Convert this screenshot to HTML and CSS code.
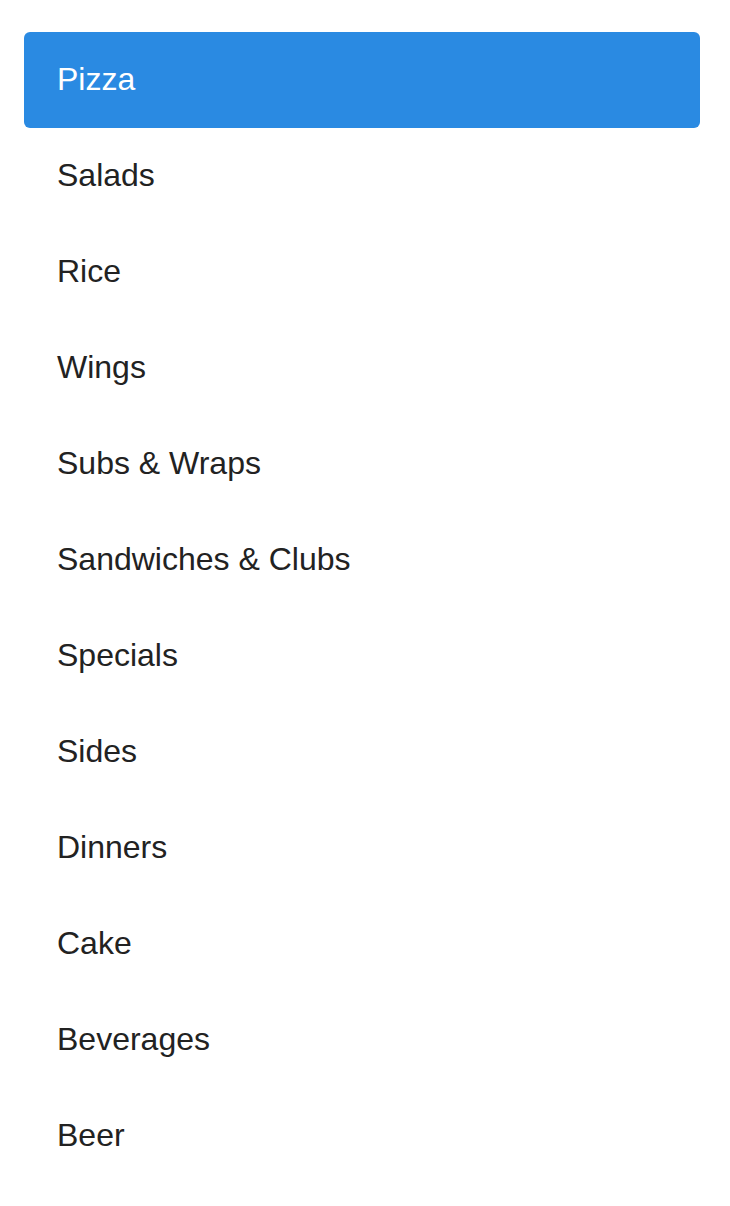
FILE: index.html
```html
<!DOCTYPE html>
<html lang="en">
<head>
    <meta charset="UTF-8">
    <meta name="viewport" content="width=device-width, initial-scale=1.0">
    <title>Menu Categories</title>
    <link rel="stylesheet" href="styles.css">
</head>
<body>
    <ul class="categories">
        <li><a href="#" class="active">Pizza</a></li>
        <li><a href="#">Salads</a></li>
        <li><a href="#">Rice</a></li>
        <li><a href="#">Wings</a></li>
        <li><a href="#">Subs &amp; Wraps</a></li>
        <li><a href="#">Sandwiches &amp; Clubs</a></li>
        <li><a href="#">Specials</a></li>
        <li><a href="#">Sides</a></li>
        <li><a href="#">Dinners</a></li>
        <li><a href="#">Cake</a></li>
        <li><a href="#">Beverages</a></li>
        <li><a href="#">Beer</a></li>
    </ul>
</body>
</html>
```

FILE: styles.css
```css
body {
    font-family: "Liberation Sans", Arial, sans-serif;
    margin: 0;
    padding: 32px 30px 0 24px;
    background-color: #fff;
}
.categories {
    list-style: none;
    margin: 0;
    padding: 0;
}
.categories a {
    display: block;
    padding: 29px 30px 31px 33px;
    font-size: 32px;
    line-height: 36px;
    color: #222;
    text-decoration: none;
    border-radius: 6px;
}
.categories a.active {
    background-color: #2a8ae2;
    color: #fff;
}
```
